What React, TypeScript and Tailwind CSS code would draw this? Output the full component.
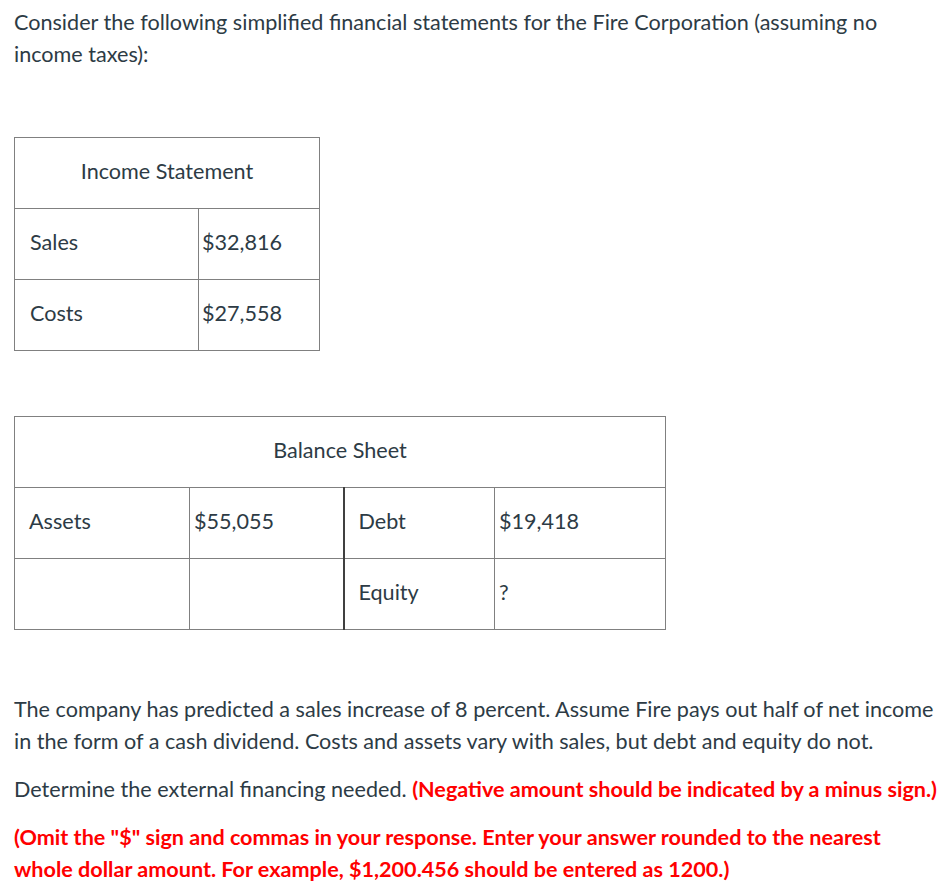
import React from 'react';

const cell = 'border border-[#808080] h-[71px] align-middle pb-[5px]';

const IncomeTable: React.FC = () => (
  <table className="border-collapse w-[306px] mt-[67px]">
    <tbody>
      <tr>
        <td colSpan={2} className={`${cell} text-center`}>Income Statement</td>
      </tr>
      <tr>
        <td className={`${cell} w-[184px] pl-[15px]`}>Sales</td>
        <td className={`${cell} pl-[3px]`}>$32,816</td>
      </tr>
      <tr>
        <td className={`${cell} pl-[15px]`}>Costs</td>
        <td className={`${cell} pl-[3px]`}>$27,558</td>
      </tr>
    </tbody>
  </table>
);

const BalanceTable: React.FC = () => (
  <table className="border-collapse w-[652px] mt-[65px]">
    <tbody>
      <tr>
        <td colSpan={4} className={`${cell} text-center`}>Balance Sheet</td>
      </tr>
      <tr>
        <td className={`${cell} w-[175px] pl-[14px]`}>Assets</td>
        <td className={`${cell} w-[154px] pl-[4px] border-r-2 border-r-[#404040]`}>$55,055</td>
        <td className={`${cell} w-[151px] pl-[14px]`}>Debt</td>
        <td className={`${cell} pl-[4px]`}>$19,418</td>
      </tr>
      <tr>
        <td className={`${cell} pl-[14px]`}></td>
        <td className={`${cell} border-r-2 border-r-[#404040]`}></td>
        <td className={`${cell} pl-[14px]`}>Equity</td>
        <td className={`${cell} pl-[4px]`}>?</td>
      </tr>
    </tbody>
  </table>
);

export default function App() {
  return (
    <div className="bg-white min-h-[890px] pl-[14px] pr-[4px] pt-[6px] text-[21.6px] leading-[32px] text-[#2d3b45] font-['Lato',sans-serif]">
      <p className="pr-[60px]">
        Consider the following simplified financial statements for the Fire Corporation (assuming no
        income taxes):
      </p>
      <IncomeTable />
      <BalanceTable />
      <p className="mt-[63px]">
        The company has predicted a sales increase of 8 percent. Assume Fire pays out half of net income
        in the form of a cash dividend. Costs and assets vary with sales, but debt and equity do not.
      </p>
      <p className="mt-[16px]">
        Determine the external financing needed.{' '}
        <strong className="text-[#ff0000] font-bold">(Negative amount should be indicated by a minus sign.)</strong>
      </p>
      <p className="mt-[16px] text-[#ff0000] font-bold">
        (Omit the "$" sign and commas in your response. Enter your answer rounded to the nearest whole
        dollar amount. For example, $1,200.456 should be entered as 1200.)
      </p>
    </div>
  );
}
